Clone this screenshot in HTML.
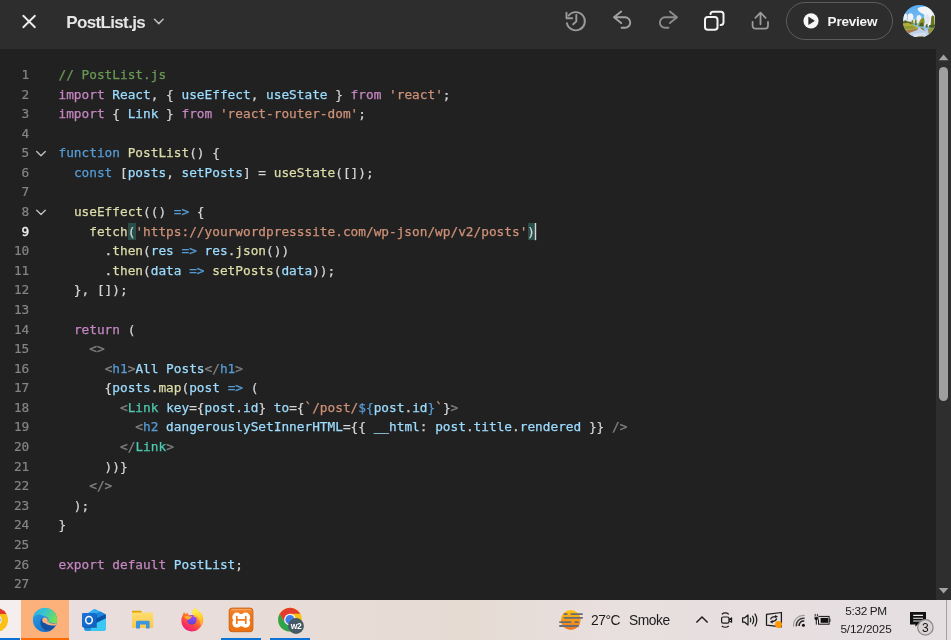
<!DOCTYPE html>
<html lang="en">
<head>
<meta charset="utf-8">
<title>PostList.js</title>
<style>
*{box-sizing:border-box;margin:0;padding:0}
html,body{width:951px;height:640px;overflow:hidden;background:#212121}
body{position:relative;font-family:"Liberation Sans",sans-serif}
#topbar{position:absolute;left:0;top:0;width:951px;height:49px;background:#2d2d2d}
#topbar .abs{position:absolute}
#fname{position:absolute;left:66.2px;top:12.8px;font-size:17px;font-weight:bold;color:#e6e6e6;letter-spacing:-0.64px;line-height:20px;white-space:nowrap}
#preview{position:absolute;left:786px;top:2px;width:107px;height:37.5px;border:1px solid #5c5c5c;border-radius:19px}
#preview span{position:absolute;left:40.6px;top:9.6px;font-size:13.5px;font-weight:bold;color:#f4f4f4;line-height:18px;letter-spacing:-0.2px}
#editor{position:absolute;left:0;top:49px;width:936px;height:551px;background:#212121;overflow:hidden}
#track{position:absolute;left:936px;top:49px;width:15px;height:551px;background:#2e2e2e}
#thumb{position:absolute;left:939px;top:67px;width:9.3px;height:334px;border-radius:4.5px;background:#9f9f9f}
.ln,.cl{position:absolute;font-family:"DejaVu Sans Mono","Liberation Mono",monospace;font-size:12.785px;line-height:19.58px;height:19.58px;white-space:pre}
.ln{left:0;width:29.3px;text-align:right;color:#858585;-webkit-text-stroke:0.2px}
.ln.act{color:#efefef;-webkit-text-stroke:0.4px}
.cl{left:58.5px;color:#d4d4d4;-webkit-text-stroke:0.25px}
.c{color:#6a9955}.k{color:#c586c0}.v{color:#9cdcfe}.s{color:#ce9178}.b{color:#569cd6}.f{color:#dcdcaa}.t{color:#4ec9b0}.g{color:#808080}
.hl{position:absolute;top:173.9px;height:17.3px;background:#2a4e4a}
#taskbar{position:absolute;left:0;top:600px;width:951px;height:40px;background:linear-gradient(90deg,#eadfdf 0,#e9dedd 80px,#e7dcd6 330px,#e6dbd3 470px,#e8dfde 600px,#e7dfe0 760px,#e5dfe2 951px);overflow:hidden}
#taskbar .abs{position:absolute}
.tt{position:absolute;color:#1b1b1b;white-space:nowrap}
.ln,.cl,.tt,#fname,#preview span,#taskbar svg{will-change:opacity}
</style>
</head>
<body>
<div id="topbar">
  <svg class="abs" style="left:0;top:0" width="951" height="49" viewBox="0 0 951 49" fill="none" stroke-linecap="round" stroke-linejoin="round">
    <!-- close X -->
    <path d="M23.3 15.8 L34.9 27.2 M34.9 15.8 L23.3 27.2" stroke="#ececec" stroke-width="1.9"/>
    <!-- filename chevron -->
    <path d="M154.5 19.3 L158.8 23.6 L163.1 19.3" stroke="#bdbdbd" stroke-width="1.5"/>
    <!-- history -->
    <g stroke="#9b9b9b" stroke-width="1.9">
      <path d="M566.9 23.2 A9.1 9.1 0 1 0 568.6 15.6"/>
      <path d="M566.5 12.6 V18.3 H572.2"/>
      <path d="M576.3 15 V21.4 L573.2 24.3"/>
    </g>
    <!-- undo -->
    <path d="M621.2 11.5 L614 17.3 L621.2 23.1 M614.2 17.3 H625 A5.25 5.25 0 0 1 625 27.8 H621.6" stroke="#a2a2a2" stroke-width="1.9"/>
    <!-- redo -->
    <path d="M669.9 11.5 L677 17.3 L669.9 23.1 M676.8 17.3 H665.1 A5.25 5.25 0 0 0 665.1 27.8 H668.5" stroke="#8b8b8b" stroke-width="1.9"/>
    <!-- copy -->
    <g stroke="#f3f3f3" stroke-width="2">
      <path d="M710.5 13.6 V14 A2.6 2.6 0 0 1 713.1 11.8 H720.9 A2.6 2.6 0 0 1 723.5 14.4 V22.3 A2.6 2.6 0 0 1 720.9 24.9 H720.6" />
      <rect x="705" y="17" width="12.5" height="12.8" rx="2.8"/>
    </g>
    <!-- upload -->
    <g stroke="#9b9b9b" stroke-width="1.8">
      <path d="M760.5 24.3 V13 M755.4 17.8 L760.5 12.7 L765.6 17.8"/>
      <path d="M752.6 22 V25.8 A2.8 2.8 0 0 0 755.4 28.6 H765.2 A2.8 2.8 0 0 0 768 25.8 V22"/>
    </g>
    <!-- preview play -->
    <circle cx="811" cy="20.8" r="7.6" fill="#f7f7f7" stroke="none"/>
    <path d="M809 17.4 L814.3 20.8 L809 24.2 Z" fill="#2d2d2d" stroke="#2d2d2d" stroke-width="0.8"/>
  </svg>
  <div id="fname">PostList.js</div>
  <div id="preview"><span>Preview</span></div>
  <svg class="abs" style="left:902.7px;top:4.7px" width="32.6" height="32.6" viewBox="60 60 520 520">
    <defs>
      <clipPath id="avc"><circle cx="320" cy="320" r="260"/></clipPath>
      <linearGradient id="sky" x1="0" y1="0" x2="0" y2="1"><stop offset="0" stop-color="#58aaf0"/><stop offset="0.6" stop-color="#7fc2f3"/><stop offset="1" stop-color="#b7d8f2"/></linearGradient>
      <filter id="avb" x="-5%" y="-5%" width="110%" height="110%"><feGaussianBlur stdDeviation="7"/></filter>
    </defs>
    <g clip-path="url(#avc)">
      <rect x="60" y="60" width="520" height="520" fill="url(#sky)"/>
      <g filter="url(#avb)">
        <!-- clouds -->
        <path d="M290 120 C330 80 420 70 470 100 C540 110 580 180 580 260 L580 400 L400 400 L400 210 C360 190 300 170 290 120 Z" fill="#f3f5f8"/>
        <path d="M430 200 C470 210 500 260 480 330 L440 400 L400 400 Z" fill="#dfe6ef"/>
        <ellipse cx="95" cy="250" rx="32" ry="55" fill="#eef2f7"/>
        <ellipse cx="180" cy="250" rx="45" ry="60" fill="#f1f4f8"/>
        <ellipse cx="315" cy="280" rx="40" ry="62" fill="#eef2f7"/>
        <rect x="60" y="290" width="330" height="60" fill="#e6ecf3"/>
        <!-- far trees -->
        <path d="M60 320 L100 305 L140 325 L200 330 L200 380 L60 380 Z" fill="#55662a"/>
        <path d="M195 372 L200 305 L222 296 L232 372 Z" fill="#7d8a2e"/>
        <path d="M245 385 L252 295 L272 288 L284 385 Z" fill="#6d7d2a"/>
        <path d="M300 400 L320 330 L350 275 L395 268 L405 330 L385 405 Z" fill="#8c8f27"/>
        <path d="M320 400 L335 350 L380 340 L390 405 Z" fill="#4f5e22"/>
        <path d="M420 420 L425 370 L450 365 L455 420 Z" fill="#55662a"/>
        <path d="M500 410 L510 250 L530 225 L560 240 L565 410 Z" fill="#6b7424"/>
        <path d="M470 420 L480 380 L580 370 L580 430 Z" fill="#4f5e22"/>
        <!-- field -->
        <path d="M60 355 L140 345 L230 385 L300 420 L290 445 L60 470 Z" fill="#b4ad38"/>
        <path d="M60 400 L200 395 L290 430 L60 450 Z" fill="#8f9a30"/>
        <!-- banks -->
        <path d="M60 470 L290 440 L310 455 L170 510 L60 520 Z" fill="#a9794a"/>
        <path d="M330 418 L380 428 L410 470 L380 470 Z" fill="#9a6a3f"/>
        <path d="M455 440 L500 430 L580 410 L580 520 L470 530 Z" fill="#8f9a30"/>
        <path d="M455 445 L480 450 L490 525 L465 530 Z" fill="#a9794a"/>
        <!-- stream -->
        <path d="M305 428 L335 432 L400 472 L460 455 L470 525 L430 580 L180 580 L150 510 L290 460 Z" fill="#bdd0e6"/>
        <path d="M220 520 L420 500 L440 560 L240 580 Z" fill="#d3dfef"/>
        <path d="M290 560 L380 550 L400 580 L290 580 Z" fill="#9c8266"/>
      </g>
    </g>
  </svg>
</div>
<div id="editor">
  <div class="hl" style="left:128.1px;width:7.6px"></div><div class="hl" style="left:528px;width:7.4px"></div>
<!--CODE-->
  <div class="ln" style="top:16.00px">1</div><div class="cl" style="top:16.00px"><span class="c">// PostList.js</span></div>
  <div class="ln" style="top:35.58px">2</div><div class="cl" style="top:35.58px"><span class="k">import</span> <span class="v">React</span>, { <span class="v">useEffect</span>, <span class="v">useState</span> } <span class="k">from</span> <span class="s">'react'</span>;</div>
  <div class="ln" style="top:55.16px">3</div><div class="cl" style="top:55.16px"><span class="k">import</span> { <span class="v">Link</span> } <span class="k">from</span> <span class="s">'react-router-dom'</span>;</div>
  <div class="ln" style="top:74.74px">4</div><div class="cl" style="top:74.74px"></div>
  <div class="ln" style="top:94.32px">5</div><div class="cl" style="top:94.32px"><span class="b">function</span> <span class="f">PostList</span>() {</div>
  <div class="ln" style="top:113.90px">6</div><div class="cl" style="top:113.90px">  <span class="b">const</span> [<span class="v">posts</span>, <span class="v">setPosts</span>] = <span class="f">useState</span>([]);</div>
  <div class="ln" style="top:133.48px">7</div><div class="cl" style="top:133.48px"></div>
  <div class="ln" style="top:153.06px">8</div><div class="cl" style="top:153.06px">  <span class="f">useEffect</span>(() <span class="b">=&gt;</span> {</div>
  <div class="ln act" style="top:172.64px">9</div><div class="cl" style="top:172.64px">    <span class="f">fetch</span>(<span class="s">'https://yourwordpresssite.com/wp-json/wp/v2/posts'</span>)</div>
  <div class="ln" style="top:192.22px">10</div><div class="cl" style="top:192.22px">      .<span class="f">then</span>(<span class="v">res</span> <span class="b">=&gt;</span> <span class="v">res</span>.<span class="f">json</span>())</div>
  <div class="ln" style="top:211.80px">11</div><div class="cl" style="top:211.80px">      .<span class="f">then</span>(<span class="v">data</span> <span class="b">=&gt;</span> <span class="f">setPosts</span>(<span class="v">data</span>));</div>
  <div class="ln" style="top:231.38px">12</div><div class="cl" style="top:231.38px">  }, []);</div>
  <div class="ln" style="top:250.96px">13</div><div class="cl" style="top:250.96px"></div>
  <div class="ln" style="top:270.54px">14</div><div class="cl" style="top:270.54px">  <span class="k">return</span> (</div>
  <div class="ln" style="top:290.12px">15</div><div class="cl" style="top:290.12px">    <span class="g">&lt;&gt;</span></div>
  <div class="ln" style="top:309.70px">16</div><div class="cl" style="top:309.70px">      <span class="g">&lt;</span><span class="b">h1</span><span class="g">&gt;</span><span class="v">All Posts</span><span class="g">&lt;/</span><span class="b">h1</span><span class="g">&gt;</span></div>
  <div class="ln" style="top:329.28px">17</div><div class="cl" style="top:329.28px">      {<span class="v">posts</span>.<span class="f">map</span>(<span class="v">post</span> <span class="b">=&gt;</span> (</div>
  <div class="ln" style="top:348.86px">18</div><div class="cl" style="top:348.86px">        <span class="g">&lt;</span><span class="t">Link</span> <span class="v">key</span>={<span class="v">post</span>.<span class="v">id</span>} <span class="v">to</span>={<span class="s">`/post/</span><span class="b">${</span><span class="v">post</span>.<span class="v">id</span><span class="b">}</span><span class="s">`</span>}<span class="g">&gt;</span></div>
  <div class="ln" style="top:368.44px">19</div><div class="cl" style="top:368.44px">          <span class="g">&lt;</span><span class="b">h2</span> <span class="v">dangerouslySetInnerHTML</span>={{ <span class="v">__html</span>: <span class="v">post</span>.<span class="v">title</span>.<span class="v">rendered</span> }} <span class="g">/&gt;</span></div>
  <div class="ln" style="top:388.02px">20</div><div class="cl" style="top:388.02px">        <span class="g">&lt;/</span><span class="t">Link</span><span class="g">&gt;</span></div>
  <div class="ln" style="top:407.60px">21</div><div class="cl" style="top:407.60px">      ))}</div>
  <div class="ln" style="top:427.18px">22</div><div class="cl" style="top:427.18px">    <span class="g">&lt;/&gt;</span></div>
  <div class="ln" style="top:446.76px">23</div><div class="cl" style="top:446.76px">  );</div>
  <div class="ln" style="top:466.34px">24</div><div class="cl" style="top:466.34px">}</div>
  <div class="ln" style="top:485.92px">25</div><div class="cl" style="top:485.92px"></div>
  <div class="ln" style="top:505.50px">26</div><div class="cl" style="top:505.50px"><span class="k">export</span> <span class="k">default</span> <span class="v">PostList</span>;</div>
  <div class="ln" style="top:525.08px">27</div><div class="cl" style="top:525.08px"></div>
<!--/CODE-->
  <svg style="position:absolute;left:0;top:0" width="936" height="551" viewBox="0 49 936 551" fill="none" stroke-linecap="round" stroke-linejoin="round">
    <path d="M36.7 151.5 L41 155.8 L45.3 151.5" stroke="#c5c5c5" stroke-width="1.25"/>
    <path d="M36.7 210.2 L41 214.5 L45.3 210.2" stroke="#c5c5c5" stroke-width="1.25"/>
    <rect x="534.8" y="223" width="1.4" height="17.2" fill="#d6d6d6" stroke="none"/>
  </svg>
</div>
<div id="track"></div>
<div id="thumb"></div>
<svg style="position:absolute;left:936px;top:49px" width="15" height="551" viewBox="936 49 15 551">
  <path d="M938.8 60.2 L943.6 54.6 L948.4 60.2 Z" fill="#a3a3a3"/>
  <path d="M938.8 588 L943.6 593.4 L948.4 588 Z" fill="#a3a3a3"/>
</svg>
<div id="taskbar">
  <div class="abs" style="left:0;top:0;width:20.5px;height:40px;background:#f4efee"></div>
  <div class="abs" style="left:0;top:38px;width:20px;height:2px;background:#0a70d4"></div>
  <div class="abs" style="left:21px;top:0;width:48px;height:40px;background:#fcb17b"></div>
  <div class="abs" style="left:21px;top:38px;width:48px;height:2px;background:#ff6a00"></div>
  <div class="abs" style="left:221px;top:38px;width:40px;height:2px;background:#0a74d8"></div>
  <div class="abs" style="left:270px;top:38px;width:40px;height:2px;background:#0a74d8"></div>
  <div class="abs" style="left:946px;top:0;width:1px;height:40px;background:#a3a0a0"></div>
  <svg class="abs" style="left:0;top:0" width="951" height="40" viewBox="0 600 951 40">
    <defs>
      <linearGradient id="edgeA" x1="0" y1="0" x2="0.8" y2="1"><stop offset="0" stop-color="#2ba6ea"/><stop offset="1" stop-color="#1667c2"/></linearGradient>
      <linearGradient id="edgeB" x1="0" y1="0.2" x2="1" y2="0.55"><stop offset="0" stop-color="#2cb0e8"/><stop offset="0.45" stop-color="#38c4cc"/><stop offset="1" stop-color="#72e254"/></linearGradient>
      <linearGradient id="ffx" x1="0.85" y1="0.05" x2="0.3" y2="1"><stop offset="0" stop-color="#ffe83c"/><stop offset="0.3" stop-color="#ffa726"/><stop offset="0.6" stop-color="#ff5a33"/><stop offset="0.85" stop-color="#f72c62"/><stop offset="1" stop-color="#e4208c"/></linearGradient>
      <linearGradient id="fflame" x1="0.3" y1="0" x2="0.7" y2="1"><stop offset="0" stop-color="#fff544"/><stop offset="0.6" stop-color="#ffd234"/><stop offset="1" stop-color="#ffa52a"/></linearGradient>
      <linearGradient id="ffglobe" x1="0.5" y1="0" x2="0.5" y2="1"><stop offset="0" stop-color="#a946f2"/><stop offset="0.5" stop-color="#8048ec"/><stop offset="1" stop-color="#5646cc"/></linearGradient>
      <linearGradient id="sun" x1="0" y1="0" x2="0" y2="1"><stop offset="0" stop-color="#fcc512"/><stop offset="1" stop-color="#ee711e"/></linearGradient>
      <linearGradient id="fold" x1="0" y1="0" x2="0" y2="1"><stop offset="0" stop-color="#ffdc70"/><stop offset="1" stop-color="#f8c94c"/></linearGradient>
      <linearGradient id="xam" x1="0" y1="0" x2="0" y2="1"><stop offset="0" stop-color="#f58a38"/><stop offset="0.3" stop-color="#f07616"/><stop offset="1" stop-color="#ee7210"/></linearGradient>
      <linearGradient id="olk" x1="0" y1="0" x2="1" y2="1"><stop offset="0" stop-color="#1c76da"/><stop offset="1" stop-color="#0f5ebe"/></linearGradient>
      <clipPath id="chA"><rect x="0" y="600" width="20" height="40"/></clipPath>
    </defs>
    <!-- chrome partial -->
    <g clip-path="url(#chA)">
      <circle cx="-4" cy="620" r="12" fill="#fbc116"/>
      <path d="M-14.4 614 A12 12 0 0 1 6.4 614 L-4 614 L-4 620 Z" fill="#e33b2e"/>
      <circle cx="-4" cy="620" r="5.7" fill="#f4f4f4"/>
      <circle cx="-4" cy="620" r="4.5" fill="#3f86f2"/>
    </g>
    <!-- edge -->
    <g transform="translate(45 620)">
      <circle cx="0" cy="0" r="12.1" fill="url(#edgeA)"/>
      <path d="M-11.9 -2.1 A12.1 12.1 0 1 1 11.5 3.8 L2.5 2.1 C4.5 0.5 3.5 -3 0.5 -3.6 L-1.3 -3.8 C-3 -5 -5.5 -5.8 -7 -5.4 C-9 -4.8 -10.8 -3.5 -11.9 -2.1 Z" fill="url(#edgeB)"/>
      <path d="M-2.6 -1.8 C-4.6 -1 -5.2 3 -3.9 5.6 C-2.8 8 -1 9.8 1 10.4 C4 11 7.6 9.5 9.8 6.3 L10.3 5.5 C5 5.8 2 5 0 2.9 C-1.5 2.5 -2.6 1 -2.6 -0.2 Z" fill="#14509f"/>
      <circle cx="0" cy="0.2" r="2.7" fill="#fcb17b"/>
      <path d="M-0.6 2.6 C2 5 5 5.9 10.3 5.5 L11.6 3.6 C8 4 5 3.5 2.3 1.6 Z" fill="#fcb17b"/>
    </g>
    <!-- outlook -->
    <path d="M84.3 629 L84.3 615.6 L93.6 609.2 Q94.5 608.6 95.5 609.2 L105 614 Q105.8 614.5 105.8 615.5 L105.8 629 Q105.8 630.8 104 630.8 L86.1 630.8 Q84.3 630.8 84.3 629 Z" fill="#2fadee"/>
    <path d="M100.2 611.5 L105 614 Q105.8 614.5 105.8 615.5 L96.4 619.6 L96 613.4 Z" fill="#1a86dc"/>
    <path d="M96.4 618.6 L105.4 614.2 Q105.8 614.6 105.8 615.5 L105.8 618.6 L96.6 623 Z" fill="#0b50a8"/>
    <path d="M96.6 623 L105.8 618.6 L105.8 629 Q105.8 630.8 104 630.8 L86.1 630.8 Q84.3 630.8 84.3 629 L84.3 626 Z" fill="#39c8f6"/>
    <path d="M84.3 626.5 L91.5 626.5 L90.5 630.8 L86.1 630.8 Q84.3 630.8 84.3 629 Z" fill="#1e8fe2"/>
    <rect x="83" y="614" width="14" height="14" rx="0.8" fill="#0a3f8c" opacity="0.55"/>
    <rect x="82" y="613" width="14" height="14" rx="0.8" fill="url(#olk)"/>
    <ellipse cx="89" cy="620.1" rx="3.3" ry="3.6" fill="none" stroke="#ffffff" stroke-width="1.5"/>
    <!-- explorer -->
    <path d="M132 611.6 Q132 610.8 132.8 610.8 L140.5 610.8 Q141.3 610.8 141.6 611.6 L142 613.4 L132 613.4 Z" fill="#e4a400"/>
    <rect x="132" y="612.5" width="21.2" height="15.5" rx="0.8" fill="url(#fold)"/>
    <path d="M136 628.6 L136 622.2 Q136 620.8 137.4 620.8 L148.2 620.8 Q149.6 620.8 149.6 622.2 L149.6 628.6 L146 628.6 L146 624.4 L140 624.4 L140 628.6 Z" fill="#3b96de"/>
    <!-- firefox -->
    <path d="M182.7 615.6 L183.9 611.9 L185.5 614 L187.6 612.6 L188.5 614.7 L190 615.2 L193 614.7 C192 611.5 193.6 609.6 195 607.7 C196.4 610.4 200.6 611.6 202.3 615.2 C203.6 618 203.3 621 202.4 622.5 A10.6 10.6 0 1 1 182.7 615.6 Z" fill="url(#ffx)"/>
    <path d="M192.6 614.8 C192 611.5 193.6 609.6 195 607.7 C196.4 610.4 200.6 611.6 202.3 615.2 C203.7 618.2 203.5 621.5 202.4 624 C201.5 626 200 625 200 623 C200 620 198.5 617 196 615.4 Z" fill="url(#fflame)"/>
    <circle cx="191.8" cy="619.9" r="4.8" fill="url(#ffglobe)"/>
    <path d="M183.8 617 C185.8 615.6 188.2 615.8 189.8 616.6 C190.6 616.2 191.6 616.3 192.4 616.8 C191.4 617.2 190.8 617.8 190.2 618.6 C189.2 619.8 187.4 619.8 186.4 619 C185.4 618.2 184.8 617.4 183.8 617 Z" fill="#ffb024"/>
    <path d="M193.2 614.9 C195 615.1 196.6 616.2 197.2 617.6 C196.2 616.8 194.8 616.6 193.8 617 C194.4 616.2 194 615.4 193.2 614.9 Z" fill="#ffd23a"/>
    <!-- xampp -->
    <rect x="229.2" y="608.1" width="23.7" height="23.6" rx="2.8" fill="url(#xam)" stroke="#c9600f" stroke-width="0.9"/>
    <path d="M231.5 609.6 H250.6" stroke="#f9ac6c" stroke-width="1" fill="none"/>
    <g fill="#ffffff">
      <circle cx="236.9" cy="617.2" r="4.6"/><circle cx="245.6" cy="617.2" r="4.6"/>
      <circle cx="236.9" cy="623.1" r="4.6"/><circle cx="245.6" cy="623.1" r="4.6"/>
      <rect x="236.9" y="614" width="8.7" height="12.3"/>
    </g>
    <path d="M236.8 616.7 V623.2 M245.8 616.7 V623.2 M236.8 619.9 H245.8" stroke="#f27a1c" stroke-width="1.7" stroke-linecap="round" fill="none"/>
    <!-- chrome w2 -->
    <circle cx="290" cy="619.7" r="11.9" fill="#fbc116"/>
    <path d="M279.7 613.75 L284.9 622.65 L290 619.7 L295.1 622.65 L290 631.6 A11.9 11.9 0 0 1 279.7 613.75 Z" fill="#2da44f"/>
    <path d="M279.7 613.75 A11.9 11.9 0 0 1 300.3 613.75 L290 613.75 L290 619.7 L284.9 622.65 Z" fill="#e33b2e"/>
    <circle cx="290" cy="619.7" r="5.9" fill="#f4f4f4"/>
    <circle cx="290" cy="619.7" r="4.6" fill="#3f7fe8"/>
    <circle cx="296" cy="626" r="7.9" fill="#455a64"/>
    <text x="296" y="629" font-family="Liberation Sans, sans-serif" font-weight="bold" font-size="8.5" fill="#ffffff" text-anchor="middle" letter-spacing="-0.3">w2</text>
    <!-- weather -->
    <circle cx="570.8" cy="620" r="9.9" fill="url(#sun)"/>
    <g stroke="#686c75" stroke-width="1.8" fill="none">
      <path d="M563.7 614.1 H567.5 M570.5 614.1 H582.8 M563.7 617.9 H582.8 M559.3 622.2 H571.2 M574.6 622.2 H578.7 M559.3 626 H578.7"/>
    </g>
    <!-- tray chevron -->
    <path d="M696.4 622.6 L702 616.9 L707.6 622.6" fill="none" stroke="#1a1a1a" stroke-width="1.4"/>
    <!-- meet now -->
    <g fill="none" stroke="#1a1a1a" stroke-width="1.2">
      <rect x="721.6" y="617" width="7.4" height="6.2" rx="1.6"/>
      <path d="M729 619.4 L731.6 618 L731.6 622.2 L729 620.8" stroke-linejoin="round"/>
      <path d="M721.8 614.3 Q725.3 611.6 728.8 614.3"/>
      <path d="M721.8 625.9 Q725.3 628.6 728.8 625.9"/>
    </g>
    <!-- volume -->
    <g fill="none" stroke="#1a1a1a" stroke-width="1.2" stroke-linejoin="round">
      <path d="M742.6 617.8 H744.8 L748 614.9 V625.1 L744.8 622.2 H742.6 Z"/>
      <path d="M750.2 617.7 Q751.6 620 750.2 622.3"/>
      <path d="M752.4 615.8 Q755 620 752.4 624.2"/>
      <path d="M754.8 613.6 Q758.8 620 754.8 626.4"/>
    </g>
    <!-- display sync -->
    <g fill="none" stroke="#1a1a1a" stroke-width="1.25" stroke-linejoin="round">
      <path d="M766.5 614.4 L781.4 612.5 L781.4 626.8 L766.5 625.2 Z"/>
      <path d="M770.6 619.4 Q771.4 616.6 775.6 616.6"/>
      <path d="M776.8 618.6 Q775.6 621.6 772 621.7"/>
    </g>
    <path d="M775 614.9 L778 616.4 L775.2 618.2 Z M772.6 620 L769.8 622 L772.8 623.4 Z" fill="#1a1a1a"/>
    <circle cx="778.5" cy="624.5" r="3.5" fill="#ff9800"/>
    <!-- wifi -->
    <g fill="none" stroke-linecap="butt">
      <path d="M793.6 626.6 A9.9 9.9 0 0 1 804.8 615.5" stroke="#a09c9c" stroke-width="1.1"/>
      <path d="M796.4 626.3 A7.1 7.1 0 0 1 804.6 618.3" stroke="#3c3c3c" stroke-width="1.4"/>
      <path d="M799.2 626 A4.3 4.3 0 0 1 804.3 621.1" stroke="#1f1f1f" stroke-width="1.5"/>
    </g>
    <circle cx="803.4" cy="625.3" r="1.5" fill="#111111"/>
    <!-- battery -->
    <rect x="818.5" y="616.4" width="10.6" height="7.8" fill="none" stroke="#151515" stroke-width="1"/>
    <rect x="820.6" y="617.9" width="7.5" height="4.9" fill="#111111"/>
    <rect x="829.4" y="618.6" width="1" height="3.4" fill="#151515"/>
    <path d="M815.2 613.9 V616.6 M817.4 613.9 V616.6" fill="none" stroke="#151515" stroke-width="0.9"/>
    <path d="M814.2 616.6 H818.4 V618.6 Q818.4 620.6 816.3 620.6 Q814.2 620.6 814.2 618.6 Z" fill="#151515" stroke="#e6dfe1" stroke-width="0.7"/>
    <path d="M816.3 620 V624.6" fill="none" stroke="#151515" stroke-width="1"/>
    <rect x="817.1" y="615.6" width="2" height="9.4" fill="none" stroke="none"/>
    <!-- notification -->
    <path d="M910 612 H926 V624.4 H917.6 L915.4 626.8 V624.4 H910 Z" fill="#111111"/>
    <path d="M913.2 615.4 H923 M913.2 618.2 H923 M913.2 621 H923" stroke="#f1ecec" stroke-width="1.1"/>
    <circle cx="925.4" cy="627.4" r="7.7" fill="#d9d3d3" stroke="#8a8787" stroke-width="1.2"/>
    <text x="925.4" y="631.7" font-family="Liberation Sans, sans-serif" font-size="12" fill="#111111" text-anchor="middle">3</text>
  </svg>
  <div class="tt" style="left:591px;top:11.5px;font-size:13.8px;line-height:18px;letter-spacing:-0.42px">27°C</div>
  <div class="tt" style="left:629px;top:11.5px;font-size:13.8px;line-height:18px;letter-spacing:-0.42px">Smoke</div>
  <div class="tt" style="left:845.2px;top:3.6px;font-size:11.8px;line-height:15px;letter-spacing:-0.32px">5:32 PM</div>
  <div class="tt" style="left:840.4px;top:21.6px;font-size:11.8px;line-height:15px;letter-spacing:-0.14px">5/12/2025</div>
</div>
</body>
</html>
